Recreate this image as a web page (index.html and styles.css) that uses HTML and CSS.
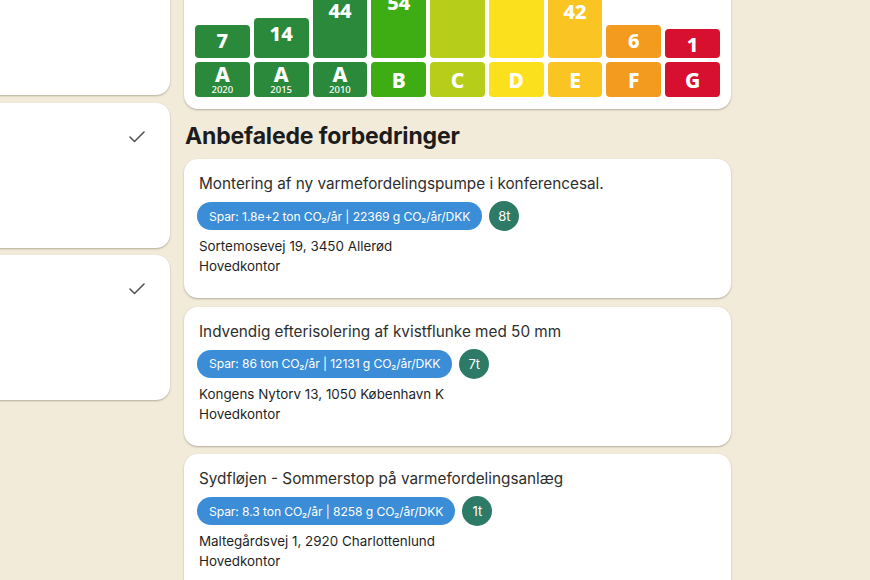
FILE: index.html
```html
<!DOCTYPE html>
<html lang="da">
<head>
<meta charset="utf-8">
<title>Anbefalede forbedringer</title>
<link rel="stylesheet" href="styles.css">
</head>
<body>
<div class="page">
  <aside class="side">
    <div class="side-card"></div>
    <div class="side-card">
      <svg class="check" viewBox="0 0 16 12" width="16" height="12"><polyline points="1,6 5.5,10.5 15,1" /></svg>
    </div>
    <div class="side-card">
      <svg class="check" viewBox="0 0 16 12" width="16" height="12"><polyline points="1,6 5.5,10.5 15,1" /></svg>
    </div>
  </aside>

  <main class="main">
    <section class="chart-card">
      <div class="chart">
        <div class="col">
          <div class="bar-area"><div class="bar c-a" style="height:33px">7</div></div>
          <div class="label c-a"><span class="letter">A</span><span class="year">2020</span></div>
        </div>
        <div class="col">
          <div class="bar-area"><div class="bar c-a" style="height:40px">14</div></div>
          <div class="label c-a"><span class="letter">A</span><span class="year">2015</span></div>
        </div>
        <div class="col">
          <div class="bar-area"><div class="bar c-a" style="height:63px">44</div></div>
          <div class="label c-a"><span class="letter">A</span><span class="year">2010</span></div>
        </div>
        <div class="col">
          <div class="bar-area"><div class="bar c-b" style="height:71px">54</div></div>
          <div class="label c-b"><span class="letter">B</span></div>
        </div>
        <div class="col">
          <div class="bar-area"><div class="bar c-c" style="height:110px">98</div></div>
          <div class="label c-c"><span class="letter">C</span></div>
        </div>
        <div class="col">
          <div class="bar-area"><div class="bar c-d" style="height:125px">117</div></div>
          <div class="label c-d"><span class="letter">D</span></div>
        </div>
        <div class="col">
          <div class="bar-area"><div class="bar c-e" style="height:62px">42</div></div>
          <div class="label c-e"><span class="letter">E</span></div>
        </div>
        <div class="col">
          <div class="bar-area"><div class="bar c-f" style="height:33px">6</div></div>
          <div class="label c-f"><span class="letter">F</span></div>
        </div>
        <div class="col">
          <div class="bar-area"><div class="bar c-g" style="height:29px">1</div></div>
          <div class="label c-g"><span class="letter">G</span></div>
        </div>
      </div>
    </section>

    <h2 class="heading">Anbefalede forbedringer</h2>

    <div class="list">
      <article class="rec">
        <p class="rec-title">Montering af ny varmefordelingspumpe i konferencesal.</p>
        <div class="tags">
          <span class="pill">Spar: 1.8e+2 ton CO₂/år | 22369 g CO₂/år/DKK</span>
          <span class="dot">8t</span>
        </div>
        <p class="meta">Sortemosevej 19, 3450 Allerød</p>
        <p class="meta">Hovedkontor</p>
      </article>
      <article class="rec">
        <p class="rec-title">Indvendig efterisolering af kvistflunke med 50 mm</p>
        <div class="tags">
          <span class="pill">Spar: 86 ton CO₂/år | 12131 g CO₂/år/DKK</span>
          <span class="dot">7t</span>
        </div>
        <p class="meta">Kongens Nytorv 13, 1050 København K</p>
        <p class="meta">Hovedkontor</p>
      </article>
      <article class="rec">
        <p class="rec-title">Sydfløjen - Sommerstop på varmefordelingsanlæg</p>
        <div class="tags">
          <span class="pill">Spar: 8.3 ton CO₂/år | 8258 g CO₂/år/DKK</span>
          <span class="dot">1t</span>
        </div>
        <p class="meta">Maltegårdsvej 1, 2920 Charlottenlund</p>
        <p class="meta">Hovedkontor</p>
      </article>
    </div>
  </main>
</div>
</body>
</html>
```

FILE: styles.css
```css
* { box-sizing: border-box; }

html, body {
  margin: 0;
  padding: 0;
  height: 100%;
}

body {
  background: #f2ebda;
  font-family: Inter, "Noto Sans", sans-serif;
  color: #2a2a2a;
  overflow: hidden;
}

.page {
  display: flex;
  align-items: flex-start;
  gap: 14px;
}

/* left column (scrolled, partially visible) */
.side {
  width: 300px;
  margin-left: -130px;
  margin-top: -50px;
  display: flex;
  flex-direction: column;
  gap: 7.5px;
}

.side-card {
  height: 145px;
  background: #fff;
  border-radius: 14px;
  box-shadow: 0 1px 2px rgba(60, 55, 40, 0.35);
  display: flex;
  justify-content: flex-end;
  align-items: flex-start;
  padding: 28px 25px;
}

.check {
  fill: none;
  stroke: #555;
  stroke-width: 1.6;
  stroke-linecap: round;
  stroke-linejoin: round;
}

/* main column */
.main {
  width: 547px;
  margin-top: -103px;
  display: flex;
  flex-direction: column;
}

.chart-card {
  background: #fff;
  border-radius: 14px;
  box-shadow: 0 1px 2px rgba(60, 55, 40, 0.35);
  padding: 11px 11px 12px;
}

.chart {
  display: grid;
  grid-template-columns: repeat(9, 1fr);
  gap: 4px;
}

.col {
  display: flex;
  flex-direction: column;
  gap: 4px;
}

.bar-area {
  height: 150px;
  display: flex;
  align-items: flex-end;
}

.bar {
  width: 100%;
  border-radius: 4px;
  color: #fff;
  font-family: "Noto Sans", sans-serif;
  font-weight: 800;
  font-size: 20px;
  line-height: 20px;
  text-align: center;
  padding-top: 6px;
}

.label {
  height: 35px;
  border-radius: 4px;
  color: #fff;
  font-family: "Noto Sans", sans-serif;
  font-weight: 800;
  display: flex;
  flex-direction: column;
  align-items: center;
  justify-content: center;
}

.letter {
  font-size: 21px;
  line-height: 18px;
}

.year {
  font-size: 9.5px;
  font-weight: 500;
  line-height: 10px;
  margin-top: 2px;
}

.c-a { background: #2a893a; }
.c-b { background: #3dad13; }
.c-c { background: #b6cd19; }
.c-d { background: #fbe01e; }
.c-e { background: #fac522; }
.c-f { background: #f29b1f; }
.c-g { background: #d7102f; }

.heading {
  margin: 13px 0 9px 1px;
  font-size: 23px;
  line-height: 28px;
  font-weight: 700;
  color: #1c1c1c;
  letter-spacing: -0.15px;
}

.list {
  display: flex;
  flex-direction: column;
  gap: 8.5px;
}

.rec {
  background: #fff;
  border-radius: 14px;
  box-shadow: 0 1px 2px rgba(60, 55, 40, 0.35);
  padding: 14px 15px 22px;
  height: 139px;
}

.rec-title {
  margin: 0;
  font-size: 15.3px;
  line-height: 22px;
  color: #2e2e2e;
}

.tags {
  display: flex;
  align-items: center;
  gap: 7px;
  margin: 6px 0 5px -2px;
}

.pill {
  background: #3a8dd6;
  color: #fff;
  height: 28px;
  border-radius: 14px;
  padding: 0 12px;
  display: flex;
  align-items: center;
  font-size: 12.15px;
  letter-spacing: -0.1px;
}

.dot {
  width: 30px;
  height: 30px;
  border-radius: 50%;
  background: #2d7a67;
  color: #fff;
  display: flex;
  align-items: center;
  justify-content: center;
  font-size: 13px;
}

.meta {
  margin: 0;
  font-size: 13.4px;
  line-height: 20px;
  color: #1f1f1f;
}
```
